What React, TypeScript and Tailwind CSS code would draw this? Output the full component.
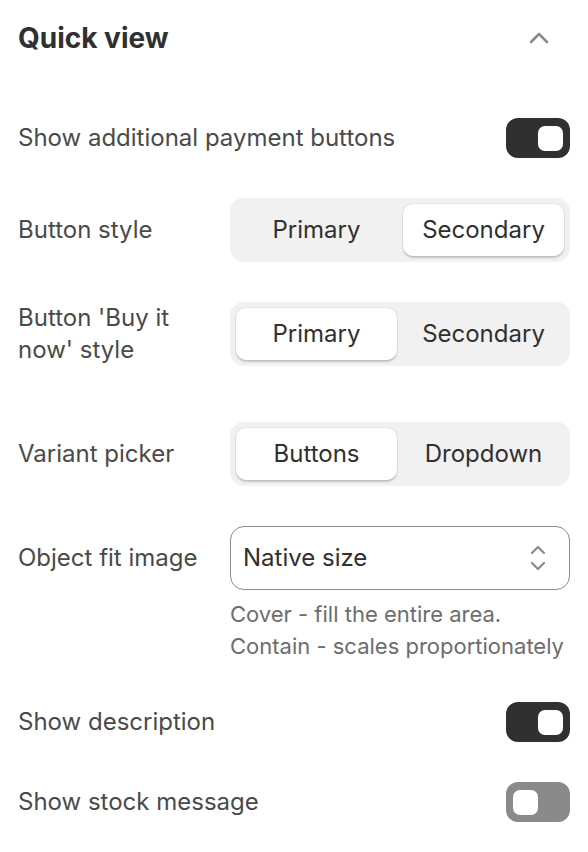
import React from "react";

function Toggle({ on }: { on: boolean }) {
  return (
    <div
      className={
        "w-16 h-10 rounded-[12px] flex items-center px-[7px] " +
        (on ? "bg-[#303030] justify-end" : "bg-[#8a8a8a] justify-start")
      }
    >
      <div className="w-[25px] h-[25px] rounded-[7px] bg-white" />
    </div>
  );
}

function Segmented({ options, selected }: { options: string[]; selected: number }) {
  return (
    <div className="w-[340px] h-16 rounded-[14px] bg-[#f1f1f1] p-[6px] gap-[6px] flex">
      {options.map((o, i) => (
        <div
          key={o}
          className={
            "flex-1 flex items-center justify-center rounded-[10px] text-[24px] text-[#303030] " +
            (i === selected ? "bg-white shadow-[0_2px_2px_rgba(0,0,0,0.18),0_0_0_1px_rgba(0,0,0,0.04)]" : "")
          }
        >
          {o}
        </div>
      ))}
    </div>
  );
}

export default function App() {
  return (
    <div
      className="w-[588px] h-[852px] bg-white px-[18px] text-[#4a4a4a] overflow-hidden"
      style={{ fontFamily: "Inter, 'Noto Sans', sans-serif" }}
    >
      <div className="flex items-center justify-between h-[76px]">
        <div className="text-[28px] font-bold text-[#303030]">Quick view</div>
        <svg width="22" height="14" viewBox="0 0 22 14" className="mr-[20px]">
          <path d="M3 11 L11 3 L19 11" fill="none" stroke="#8a8a8a" strokeWidth="2.6" strokeLinecap="round" strokeLinejoin="round" />
        </svg>
      </div>

      <div className="flex items-center justify-between mt-[42px] h-10">
        <div className="text-[24px]">Show additional payment buttons</div>
        <Toggle on />
      </div>

      <div className="flex items-center justify-between mt-10 h-16">
        <div className="text-[24px]">Button style</div>
        <Segmented options={["Primary", "Secondary"]} selected={1} />
      </div>

      <div className="flex items-center justify-between mt-10 h-16">
        <div className="text-[24px] leading-[32px] w-[200px]">Button 'Buy it now' style</div>
        <Segmented options={["Primary", "Secondary"]} selected={0} />
      </div>

      <div className="flex items-center justify-between mt-[56px] h-16">
        <div className="text-[24px]">Variant picker</div>
        <Segmented options={["Buttons", "Dropdown"]} selected={0} />
      </div>

      <div className="flex justify-between mt-10">
        <div className="text-[24px] h-16 flex items-center">Object fit image</div>
        <div className="w-[340px]">
          <div className="h-16 rounded-[14px] border border-[#8a8a8a] flex items-center justify-between pl-[12px] pr-[22px]">
            <span className="text-[24px] text-[#303030]">Native size</span>
            <svg width="18" height="28" viewBox="0 0 18 28">
              <path d="M3 9 L9 3 L15 9" fill="none" stroke="#8a8a8a" strokeWidth="2.2" strokeLinecap="round" strokeLinejoin="round" />
              <path d="M3 19 L9 25 L15 19" fill="none" stroke="#8a8a8a" strokeWidth="2.2" strokeLinecap="round" strokeLinejoin="round" />
            </svg>
          </div>
          <div className="mt-[8px] text-[22px] leading-[32px] text-[#6d6d6d]">
            <div>Cover - fill the entire area.</div>
            <div>Contain - scales proportionately</div>
          </div>
        </div>
      </div>

      <div className="flex items-center justify-between mt-[40px] h-10">
        <div className="text-[24px]">Show description</div>
        <Toggle on />
      </div>

      <div className="flex items-center justify-between mt-10 h-10">
        <div className="text-[24px]">Show stock message</div>
        <Toggle on={false} />
      </div>
    </div>
  );
}
